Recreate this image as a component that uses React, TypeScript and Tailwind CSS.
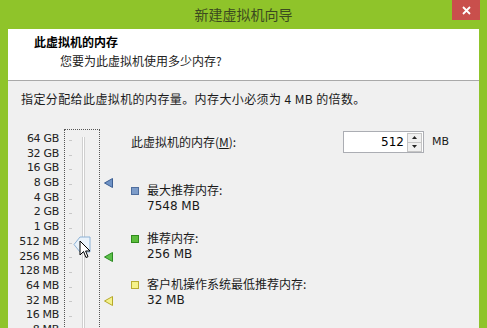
import type { ReactNode } from 'react';

const labels = ['64 GB', '32 GB', '16 GB', '8 GB', '4 GB', '2 GB', '1 GB', '512 MB', '256 MB', '128 MB', '64 MB', '32 MB', '16 MB', '8 MB'];

const cjk = { fontFamily: '"Noto Sans CJK SC", "Noto Sans", sans-serif' };
const latin = { fontFamily: 'Tahoma, "DejaVu Sans", "Liberation Sans", sans-serif' };

const Marker = ({ fill, stroke }: { fill: string; stroke: string }) => (
    <svg width="9" height="10" viewBox="0 0 9 10">
        <path d="M0.5 5 L8.5 0.5 L8.5 9.5 Z" fill={fill} stroke={stroke} strokeWidth="1" />
    </svg>
);

const Legend = ({ color, border, title, value }: { color: string; border: string; title: ReactNode; value: string }) => (
    <div className="flex items-start">
        <div className={`mt-[5px] w-[8px] h-[8px] border ${color} ${border}`} />
        <div className="ml-[8px] flex flex-col">
            <span className="text-[12px] leading-[16px] text-[#1a1a1a]" style={cjk}>{title}</span>
            <span className="text-[12px] leading-[16px] text-[#1a1a1a]" style={latin}>{value}</span>
        </div>
    </div>
);

const App = () => {
    return (
        <div className="w-[487px] h-[328px] bg-[#8fc42a] overflow-hidden flex flex-col">
            {/* title bar */}
            <div className="relative shrink-0 h-[29px] flex items-center justify-center">
                <span className="text-[14px] text-[#3b4a1f] pb-[1px]" style={cjk}>新建虚拟机向导</span>
                <div className="absolute top-0 right-[7px] w-[28px] h-[20px] bg-[#c94f4c] flex items-center justify-center">
                    <svg width="9" height="9" viewBox="0 0 9 9">
                        <path d="M1 1 L8 8 M8 1 L1 8" stroke="#fff" strokeWidth="1.8" />
                    </svg>
                </div>
            </div>

            <div className="shrink-0 mx-[8px] flex flex-col">
                {/* header */}
                <div className="shrink-0 h-[52px] bg-white border-b border-[#a9a9a9] flex flex-col pl-[26px] pt-[4px]">
                    <span className="text-[12px] leading-[17px] font-bold text-black" style={cjk}>此虚拟机的内存</span>
                    <span className="ml-[26px] mt-[2px] text-[12px] leading-[17px] text-[#222]" style={cjk}>您要为此虚拟机使用多少内存?</span>
                </div>

                {/* body */}
                <div className="shrink-0 h-[300px] bg-[#f0f0f0] flex flex-col">
                    <div className="mt-[9px] ml-[13px] text-[12px] leading-[17px] text-[#1a1a1a] tracking-[0.4px]" style={cjk}>
                        指定分配给此虚拟机的内存量。内存大小必须为 4 MB 的倍数。
                    </div>

                    <div className="mt-[22px] flex">
                        {/* slider */}
                        <div className="flex pt-[2px]">
                            <div className="w-[51px] flex flex-col pt-[1px]">
                                {labels.map(l => (
                                    <div key={l} className="h-[14.7px] leading-[14.7px] text-right text-[11px] text-[#222] tracking-[-0.3px]" style={latin}>{l}</div>
                                ))}
                            </div>
                            <div className="relative ml-[5px] -mt-[2px] w-[36px] border-x border-t border-dotted border-[#555] flex">
                                <div className="w-[9px] flex flex-col pt-[3px] pl-[4px]">
                                    {labels.map(l => (
                                        <div key={l} className="h-[14.7px] flex items-center">
                                            <div className="w-[3px] h-px bg-[#c8c8c8]" />
                                        </div>
                                    ))}
                                </div>
                                <div className="ml-[8px] mt-[7px] w-[3px] border-x border-[#d0d0d0] bg-white" />
                                {/* thumb at 512 MB */}
                                <div className="absolute left-[8px] top-[106px]">
                                    <svg width="18" height="17" viewBox="0 0 18 17">
                                        <path d="M1 8.5 L7 1 L17 1 L17 16 L7 16 Z" fill="#eaf3fb" stroke="#8db2d6" strokeWidth="1" />
                                    </svg>
                                </div>
                                {/* mouse cursor */}
                                <div className="absolute left-[14px] top-[110px]">
                                    <svg width="12" height="19" viewBox="0 0 12 19">
                                        <path d="M1 1 L1 15 L4.5 11.5 L7 17.5 L9 16.7 L6.6 11 L11 11 Z" fill="#fff" stroke="#000" strokeWidth="1" strokeLinejoin="round" />
                                    </svg>
                                </div>
                            </div>
                            <div className="ml-[4px] w-[10px] flex flex-col pt-[1px]">
                                {labels.map((l, i) => (
                                    <div key={l} className="h-[14.7px] flex items-center">
                                        {i === 3 && <Marker fill="#6f93c6" stroke="#3d5f93" />}
                                        {i === 8 && <Marker fill="#5cc04a" stroke="#2c8a22" />}
                                        {i === 11 && <Marker fill="#f4f28c" stroke="#b6a92a" />}
                                    </div>
                                ))}
                            </div>
                        </div>

                        {/* settings */}
                        <div className="ml-[17px] flex-1 flex flex-col">
                            <div className="flex items-center h-[22px] mt-[2px]">
                                <span className="text-[12px] text-[#1a1a1a]" style={cjk}>
                                    此虚拟机的内存(<span className="underline">M</span>):
                                </span>
                                <div className="ml-auto w-[81px] h-[22px] bg-white border border-[#abadb3] flex items-center">
                                    <span className="flex-1 text-right pr-[3px] text-[12px] text-black" style={latin}>512</span>
                                    <div className="w-[15px] h-[19px] mr-[1px] flex flex-col border border-[#c5c5c5] bg-[#f0f0f0]">
                                        <div className="flex-1 flex items-center justify-center border-b border-[#c5c5c5]">
                                            <svg width="5" height="3" viewBox="0 0 5 3"><path d="M2.5 0 L5 3 L0 3 Z" fill="#222" /></svg>
                                        </div>
                                        <div className="flex-1 flex items-center justify-center">
                                            <svg width="5" height="3" viewBox="0 0 5 3"><path d="M0 0 L5 0 L2.5 3 Z" fill="#222" /></svg>
                                        </div>
                                    </div>
                                </div>
                                <span className="ml-[8px] mr-[30px] text-[11px] text-[#1a1a1a]" style={latin}>MB</span>
                            </div>

                            <div className="mt-[29px]">
                                <Legend color="bg-[#7d9cc9]" border="border-[#4f6e9e]" title="最大推荐内存:" value="7548 MB" />
                            </div>
                            <div className="mt-[16px]">
                                <Legend color="bg-[#5cbd3c]" border="border-[#2f8a1c]" title="推荐内存:" value="256 MB" />
                            </div>
                            <div className="mt-[14px]">
                                <Legend color="bg-[#f6f38a]" border="border-[#b9ad32]" title="客户机操作系统最低推荐内存:" value="32 MB" />
                            </div>
                        </div>
                    </div>
                </div>
            </div>
        </div>
    );
};

export default App;
